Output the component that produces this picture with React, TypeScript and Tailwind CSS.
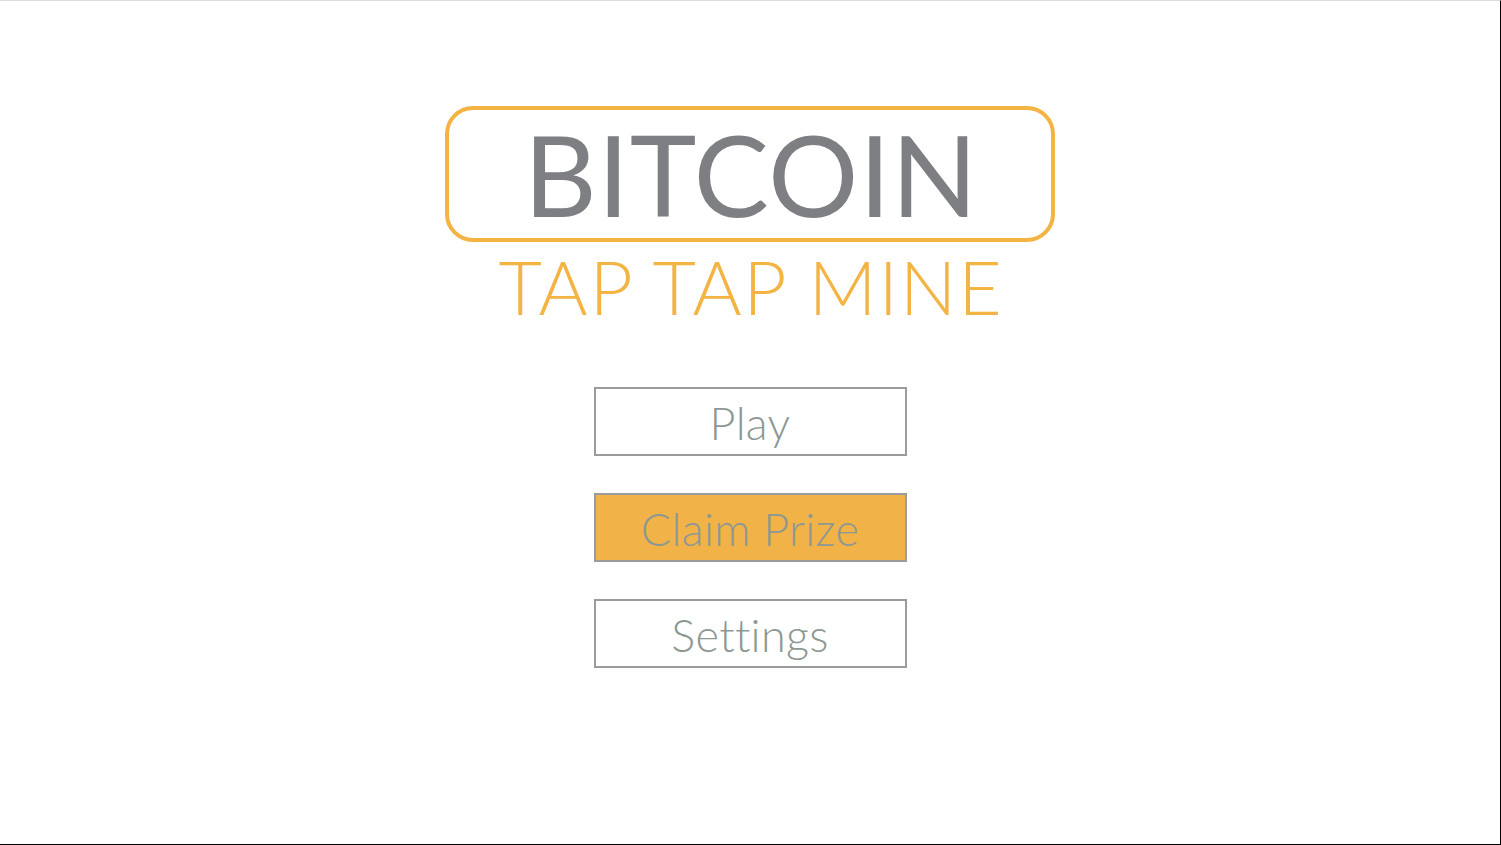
import React from "react";

const menuItems = [
  { label: "Play", highlight: false },
  { label: "Claim Prize", highlight: true },
  { label: "Settings", highlight: false },
];

function MenuButton({ label, highlight }: { label: string; highlight: boolean }) {
  return (
    <button
      className={`w-[313px] h-[69px] border-2 border-[#9a9b9b] flex items-center justify-center pt-[3px] text-[45px] leading-none font-light tracking-[0.3px] text-[#8d9893] [font-variant-ligatures:none] ${
        highlight ? "bg-[#f1b347]" : "bg-white"
      }`}
    >
      {label}
    </button>
  );
}

export default function App() {
  return (
    <div
      className="w-[1501px] h-[845px] bg-white border-t border-t-[#dcdcdc] border-r border-r-black border-b border-b-black flex flex-col items-center overflow-hidden"
      style={{ fontFamily: "Lato, 'Open Sans', sans-serif" }}
    >
      {/* Logo */}
      <div className="mt-[105px] w-[610px] h-[136px] border-4 border-[#f3b443] rounded-[28px] flex items-center justify-center">
        <span className="text-[113px] leading-none font-normal tracking-[0.6px] text-[#7e7f83] -mt-[2px] pl-[2px]">
          BITCOIN
        </span>
      </div>
      <div className="mt-[7px] text-[75px] leading-none font-light tracking-[1.8px] text-[#f3b443] pl-[2px]">
        TAP TAP MINE
      </div>

      {/* Menu */}
      <div className="mt-[63px] flex flex-col gap-[37px]">
        {menuItems.map((item) => (
          <MenuButton key={item.label} label={item.label} highlight={item.highlight} />
        ))}
      </div>
    </div>
  );
}
